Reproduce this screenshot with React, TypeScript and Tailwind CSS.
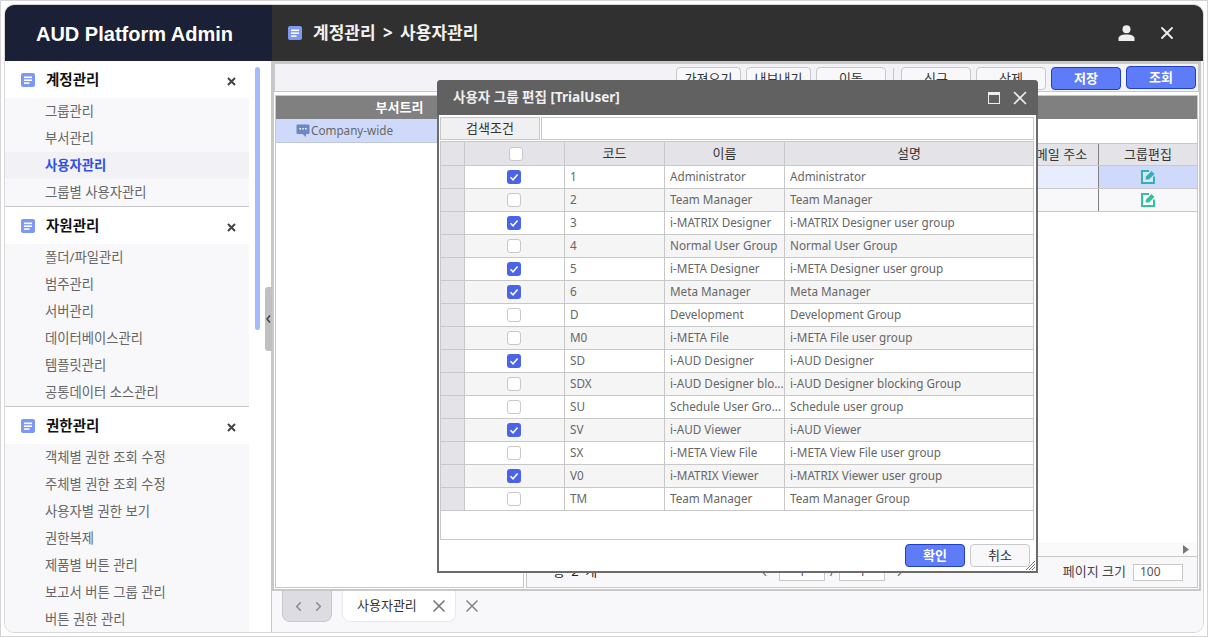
import React from "react";
import { X, ChevronLeft, ChevronRight } from "lucide-react";

const FONT = "font-['Noto_Sans','Noto_Sans_CJK_KR',sans-serif]";

function DocIcon() {
  return (
    <svg width="14" height="14" viewBox="0 0 14 14" className="shrink-0">
      <rect width="14" height="14" rx="2" fill="#7e98f6" />
      <rect x="3" y="3.5" width="8" height="1.6" fill="#fff" />
      <rect x="3" y="6.4" width="8" height="1.6" fill="#fff" />
      <rect x="3" y="9.3" width="5.5" height="1.6" fill="#fff" />
    </svg>
  );
}

function SmallX() {
  return (
    <svg width="9" height="9" viewBox="0 0 9 9" className="mt-[3px] shrink-0">
      <path d="M1 1L8 8M8 1L1 8" stroke="#444" strokeWidth="2" />
    </svg>
  );
}

function ChatIcon() {
  return (
    <svg width="14" height="14" viewBox="0 0 14 14" className="shrink-0">
      <path d="M1.5 0.5H12.5a1 1 0 0 1 1 1V9a1 1 0 0 1-1 1H10V13L6.5 10H1.5a1 1 0 0 1-1-1V1.5a1 1 0 0 1 1-1z" fill="#6d87c4" />
      <rect x="3.5" y="4" width="1.5" height="1.5" fill="#fff" />
      <rect x="6.3" y="4" width="1.5" height="1.5" fill="#fff" />
      <rect x="9.1" y="4" width="1.5" height="1.5" fill="#fff" />
    </svg>
  );
}

function EditIcon({ color, fill }: { color: string; fill: string }) {
  return (
    <svg width="14" height="14" viewBox="0 0 14 14">
      <path d="M8 1H1V13H13V6.5" fill={fill} stroke={color} strokeWidth="2" />
      <path d="M4.5 9.5L5 6.5L10.5 1L13.5 4L8 9.5Z" fill={color} />
    </svg>
  );
}

function CheckBox({ on }: { on: boolean }) {
  if (on) {
    return (
      <span className="flex h-[14px] w-[14px] items-center justify-center rounded-[3px] bg-[#4a63e8]">
        <svg width="10" height="10" viewBox="0 0 10 10">
          <path d="M1.5 5.2L4 7.8L8.6 2.4" fill="none" stroke="#fff" strokeWidth="1.5" />
        </svg>
      </span>
    );
  }
  return <span className="block h-[14px] w-[14px] rounded-[3px] border border-[#c8c8c8] bg-white" />;
}

const menus = [
  { title: "계정관리", items: ["그룹관리", "부서관리", "사용자관리", "그룹별 사용자관리"], line: true },
  { title: "자원관리", items: ["폴더/파일관리", "범주관리", "서버관리", "데이터베이스관리", "템플릿관리", "공통데이터 소스관리"], line: true },
  { title: "권한관리", items: ["객체별 권한 조회 수정", "주체별 권한 조회 수정", "사용자별 권한 보기", "권한복제", "제품별 버튼 관리", "보고서 버튼 그룹 관리", "버튼 권한 관리"], line: false },
];

const rows: [boolean, string, string, string][] = [
  [true, "1", "Administrator", "Administrator"],
  [false, "2", "Team Manager", "Team Manager"],
  [true, "3", "i-MATRIX Designer", "i-MATRIX Designer user group"],
  [false, "4", "Normal User Group", "Normal User Group"],
  [true, "5", "i-META Designer", "i-META Designer user group"],
  [true, "6", "Meta Manager", "Meta Manager"],
  [false, "D", "Development", "Development Group"],
  [false, "M0", "i-META File", "i-META File user group"],
  [true, "SD", "i-AUD Designer", "i-AUD Designer"],
  [false, "SDX", "i-AUD Designer blo...", "i-AUD Designer blocking Group"],
  [false, "SU", "Schedule User Gro...", "Schedule user group"],
  [true, "SV", "i-AUD Viewer", "i-AUD Viewer"],
  [false, "SX", "i-META View File", "i-META View File user group"],
  [true, "V0", "i-MATRIX Viewer", "i-MATRIX Viewer user group"],
  [false, "TM", "Team Manager", "Team Manager Group"],
];

function Sidebar() {
  return (
    <aside className="flex w-[267px] shrink-0 border-r border-[#c8c8c8] bg-white">
      <div className="h-full w-[244px] shrink-0 overflow-hidden">
        {menus.map((m) => (
          <section key={m.title} className={m.line ? "border-b border-[#c8c8c8]" : ""}>
            <div className="flex h-[37px] items-center bg-white pl-[16px] pr-[13px]">
              <DocIcon />
              <span className="ml-[11px] mt-px flex-1 text-[14.5px] font-bold text-[#111]">{m.title}</span>
              <SmallX />
            </div>
            <ul className="bg-[#f8f8fb]">
              {m.items.map((it) => {
                const active = it === "사용자관리";
                return (
                  <li
                    key={it}
                    className={
                      active
                        ? "flex h-[27px] items-center bg-[#f2f2f6] pl-[40px] text-[13.33px] font-bold text-[#2f4fe6]"
                        : "flex h-[27px] items-center pl-[40px] text-[13.33px] text-[#666]"
                    }
                  >
                    {it}
                  </li>
                );
              })}
            </ul>
          </section>
        ))}
      </div>
    </aside>
  );
}

const tbtn = "flex h-[23px] items-center justify-center rounded-[4px] border border-[#c8c8c8] bg-[#f8f8fb] text-[13px] text-[#333]";
const pbtn = "flex h-[23px] items-center justify-center rounded-[4px] border border-[#1f3fc4] bg-[#5f7cf8] text-[13px] font-bold text-white";

function Toolbar() {
  return (
    <div className="flex h-[29px] shrink-0 items-start justify-end gap-[5px] border border-[#c8c8c8] bg-[#f2f2f7] pr-[2px] pt-[3px]">
      <button className={tbtn + " w-[65px]"}>가져오기</button>
      <button className={tbtn + " w-[65px]"}>내보내기</button>
      <button className={tbtn + " w-[70px]"}>이동</button>
      <span className="mx-[2px] mt-[1px] h-[20px] w-px bg-[#c8c8c8]" />
      <button className={tbtn + " w-[70px]"}>신규</button>
      <button className={tbtn + " w-[70px]"}>삭제</button>
      <button className={pbtn + " w-[70px]"}>저장</button>
      <button className={pbtn + " -mt-px w-[70px]"}>조회</button>
    </div>
  );
}

function RightPanel() {
  return (
    <div className="flex min-w-0 flex-1 flex-col border border-[#c8c8c8] bg-white">
      <div className="h-[23px] shrink-0 bg-[#808080]" />
      <div className="h-[24px] shrink-0" />
      <div className="flex h-[23px] shrink-0 border-y border-[#c8c8c8] bg-[#e4e4e8] text-[13px] text-[#333]">
        <div className="flex-1" />
        <div className="flex w-[88px] items-center justify-center whitespace-nowrap pl-[3px]">이메일 주소</div>
        <div className="flex w-[99px] items-center justify-center border-l border-[#808080]">그룹편집</div>
      </div>
      <div className="flex h-[23px] shrink-0 border-b border-[#c8c8c8] bg-[#e8edfd]">
        <div className="flex-1" />
        <div className="flex w-[99px] items-center justify-center border-l border-[#808080] bg-[#cfdafb]">
          <EditIcon color="#36aeb2" fill="#d8e6f4" />
        </div>
      </div>
      <div className="flex h-[23px] shrink-0 border-b border-[#c8c8c8] bg-[#f8f8fb]">
        <div className="flex-1" />
        <div className="flex w-[99px] items-center justify-center border-l border-[#808080]">
          <EditIcon color="#33c19f" fill="#fff" />
        </div>
      </div>
      <div className="flex-1" />
      <div className="flex h-[14px] shrink-0 items-center justify-end bg-[#fafafa] pr-[8px]">
        <svg width="6" height="9" viewBox="0 0 6 9">
          <path d="M0 0L6 4.5L0 9Z" fill="#777" />
        </svg>
      </div>
      <div className="flex h-[31px] shrink-0 items-center border-t border-[#c8c8c8] bg-[#f8f8fb] pl-[26px] pr-[14px] text-[12px] text-[#333]">
        <span className="w-[200px] text-[13px] text-[#222] [word-spacing:3px]">총 2 개</span>
        <ChevronLeft size={14} className="ml-[4px] text-[#777]" />
        <span className="ml-[8px] flex h-[17px] w-[46px] items-center justify-center border border-[#c8c8c8] bg-white text-[#555]">1</span>
        <span className="mx-[5px] text-[#2f4fe6]">/</span>
        <span className="flex h-[17px] w-[46px] items-center justify-center border border-[#c8c8c8] bg-white text-[#555]">1</span>
        <ChevronRight size={14} className="ml-[8px] text-[#777]" />
        <div className="flex-1" />
        <span className="whitespace-nowrap text-[13px] text-[#444]">페이지 크기</span>
        <span className="ml-[7px] flex h-[17px] w-[50px] items-center border border-[#c8c8c8] bg-white pl-[6px] text-[#555]">100</span>
      </div>
    </div>
  );
}

function TabBar() {
  return (
    <div className="flex h-[41px] shrink-0 items-start bg-[#f8f8fb] pl-[10px]">
      <div className="flex h-[31px] w-[50px] items-center justify-center gap-[9px] rounded-b-[8px] border border-t-0 border-[#c8c8cc] bg-[#dcdce2] pl-[3px] text-[#8a8a8a]">
        <ChevronLeft size={15} strokeWidth={2.5} className="-mx-[2px]" />
        <ChevronRight size={15} strokeWidth={2.5} className="-mx-[2px]" />
      </div>
      <div className="ml-[10px] flex h-[31px] w-[114px] items-center rounded-b-[8px] border border-t-0 border-[#e8e8ee] bg-white pl-[14px] text-[13px] text-[#333]">
        사용자관리
        <X size={20} strokeWidth={2} className="ml-[12px] text-[#777]" />
      </div>
      <X size={20} strokeWidth={2} className="ml-[6px] mt-[5px] text-[#888]" />
    </div>
  );
}

function Dialog() {
  const cols = "grid grid-cols-[24px_100px_100px_120px_1fr]";
  return (
    <div className="absolute left-[436px] top-[79px] flex h-[493px] w-[601px] flex-col rounded-t-[4px] border-2 border-t-0 border-[#6c6c6c] bg-white">
      <div className="-mx-[2px] flex h-[35px] shrink-0 items-center rounded-t-[4px] bg-[#616161] pl-[16px] pr-[7px]">
        <span className="flex-1 text-[13.5px] font-bold text-[#f0f0f0]">사용자 그룹 편집 [TrialUser]</span>
        <svg width="12" height="12" viewBox="0 0 12 12" className="mr-[9px]">
          <rect x="0.5" y="0.5" width="11" height="11" fill="none" stroke="#eee" />
          <rect x="0" y="0" width="12" height="3" fill="#eee" />
        </svg>
        <X size={22} strokeWidth={1.8} className="text-[#eee]" />
      </div>
      <div className="ml-px mr-[2px] mt-[2px] flex h-[23px] shrink-0 gap-px">
        <div className="flex w-[100px] items-center justify-center border border-[#c8c8c8] bg-[#f0f0f2] text-[13px] text-[#333]">검색조건</div>
        <div className="flex-1 border border-[#c8c8c8] bg-white" />
      </div>
      <div className="ml-px mr-[2px] mt-px h-[399px] shrink-0 border border-[#c8c8c8] text-[11.7px] text-[#666]">
        <div className={cols + " h-[24px] border-b border-[#c8c8c8] bg-[#e4e4e8] text-[13px] text-[#333]"}>
          <div className="border-r border-[#c8c8c8]" />
          <div className="flex items-center justify-center border-r border-[#c8c8c8] pl-[3px]">
            <CheckBox on={false} />
          </div>
          <div className="flex items-center justify-center border-r border-[#c8c8c8]">코드</div>
          <div className="flex items-center justify-center border-r border-[#c8c8c8]">이름</div>
          <div className="flex items-center justify-center">설명</div>
        </div>
        {rows.map((r, i) => (
          <div key={r[1]} className={cols + " h-[23px] border-b border-[#c8c8c8] " + (i % 2 === 1 ? "bg-[#f5f5f5]" : "bg-white")}>
            <div className="border-r border-[#c8c8c8] bg-[#e4e4e8]" />
            <div className="flex items-center justify-center border-r border-[#c8c8c8] pr-px">
              <CheckBox on={r[0]} />
            </div>
            <div className="flex items-center border-r border-[#c8c8c8] pl-[5px]">{r[1]}</div>
            <div className="flex items-center whitespace-nowrap border-r border-[#c8c8c8] pl-[5px]">{r[2]}</div>
            <div className="flex items-center whitespace-nowrap pl-[5px]">{r[3]}</div>
          </div>
        ))}
      </div>
      <div className="flex flex-1 items-start justify-end gap-[5px] pr-[6px] pt-[4px]">
        <button className={pbtn + " w-[60px]"}>확인</button>
        <button className="flex h-[23px] w-[60px] items-center justify-center rounded-[4px] border border-[#c8c8c8] bg-[#f8f8fb] text-[13px] text-[#333]">취소</button>
      </div>
      <svg width="9" height="9" viewBox="0 0 9 9" className="absolute bottom-[1px] right-[1px]">
        <path d="M0 9L9 0M3 9L9 3M6 9L9 6" stroke="#777" strokeWidth="1" />
      </svg>
    </div>
  );
}

export default function App() {
  return (
    <div className={"relative h-[637px] w-[1208px] overflow-hidden border border-[#d4d4d4] bg-white p-[3px] " + FONT}>
      <div className="flex h-full flex-col overflow-hidden rounded-[10px] border border-[#d8d8d8]">
        <header className="flex h-[56px] shrink-0">
          <div className="flex w-[267px] shrink-0 items-center justify-center bg-[#1a2035] pr-[8px] pt-[2px] font-['Liberation_Sans',sans-serif] text-[20px] font-bold text-white">
            AUD Platform Admin
          </div>
          <div className="flex flex-1 items-center bg-[#303030] pl-[16px] pr-[26px]">
            <DocIcon />
            <span className="ml-[11px] flex-1 text-[17px] font-bold text-[#f2f2f2] [word-spacing:3px]">계정관리 &gt; 사용자관리</span>
            <svg width="17" height="16" viewBox="0 0 17 16">
              <circle cx="8.5" cy="4.2" r="4" fill="#eee" />
              <path d="M0.5 16V13.5C0.5 11 3.5 9.5 8.5 9.5S16.5 11 16.5 13.5V16Z" fill="#eee" />
            </svg>
            <X size={20} strokeWidth={2.2} className="ml-[22px] text-[#eee]" />
          </div>
        </header>
        <div className="flex min-h-0 flex-1">
          <Sidebar />
          <main className="flex min-w-0 flex-1 flex-col bg-[#f8f8fb]">
            <div className="mr-[2px] flex h-[530px] shrink-0 flex-col border-2 border-[#c8c8c8] bg-white">
              <Toolbar />
              <div className="ml-px mr-px mt-[3px] flex min-h-0 flex-1 gap-[2px] pb-px">
                <div className="w-[249px] shrink-0 border border-[#c8c8c8]">
                  <div className="flex h-[23px] items-center justify-center bg-[#808080] text-[13px] font-bold text-white">부서트리</div>
                  <div className="flex h-[24px] items-center border-b border-[#c0c8e0] bg-[#cfdafb] pl-[20px] text-[11.7px] text-[#666]">
                    <ChatIcon />
                    <span className="ml-px">Company-wide</span>
                  </div>
                </div>
                <RightPanel />
              </div>
            </div>
            <TabBar />
          </main>
        </div>
      </div>
      <div className="absolute left-[254px] top-[66px] h-[263px] w-[5px] rounded-[3px] bg-[#a4bbff]" />
      <div className="absolute left-[264px] top-[286px] flex h-[64px] w-[7px] items-center justify-center rounded-l-[3px] bg-[#c0c0c0]">
        <svg width="5" height="8" viewBox="0 0 5 8">
          <path d="M4 0.5L1 4L4 7.5" fill="none" stroke="#444" strokeWidth="1.6" />
        </svg>
      </div>
      <Dialog />
    </div>
  );
}
